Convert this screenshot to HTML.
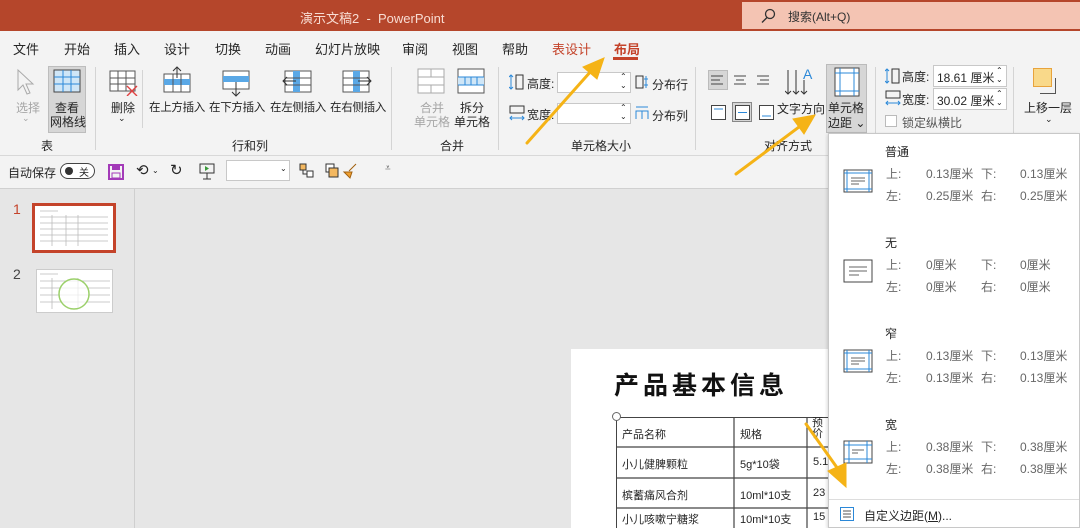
<!DOCTYPE html>
<html><head><meta charset="utf-8"><style>
*{margin:0;padding:0;box-sizing:border-box}
body{width:1080px;height:528px;overflow:hidden;position:relative;background:#e6e6e6;font-family:"Liberation Sans","Noto Sans CJK SC",sans-serif;color:#262626;font-size:12px}
.a{position:absolute;white-space:nowrap}
.g{color:#a6a6a6}
.sep{position:absolute;width:1px;background:#d4d4d4}
.ic{position:absolute}
.m{color:#666;font-size:12px}
.s{font-size:11.5px;letter-spacing:-0.3px}
</style></head><body>
<div class="a" style="left:0;top:0;width:1080px;height:31px;background:#b5462b"></div>
<div class="a" style="left:300px;top:8px;color:#f8dcd2;font-size:13px">演示文稿2 &nbsp;- &nbsp;PowerPoint</div>
<div class="a" style="left:742px;top:2px;width:338px;height:27px;background:#f4c4b3"></div>
<svg class="ic" style="left:760px;top:8px" width="16" height="16"><circle cx="10" cy="6" r="4.5" fill="none" stroke="#333" stroke-width="1.3"/><line x1="7" y1="9.5" x2="2" y2="14.5" stroke="#333" stroke-width="1.4"/></svg>
<div class="a" style="left:788px;top:8px;font-size:12px;color:#333">搜索(Alt+Q)</div>
<div class="a" style="left:0;top:31px;width:1080px;height:126px;background:#f3f3f3"></div>
<div class="a" style="left:13px;top:39px;font-size:13px">文件</div>
<div class="a" style="left:64px;top:39px;font-size:13px">开始</div>
<div class="a" style="left:114px;top:39px;font-size:13px">插入</div>
<div class="a" style="left:164px;top:39px;font-size:13px">设计</div>
<div class="a" style="left:215px;top:39px;font-size:13px">切换</div>
<div class="a" style="left:265px;top:39px;font-size:13px">动画</div>
<div class="a" style="left:315px;top:39px;font-size:13px">幻灯片放映</div>
<div class="a" style="left:402px;top:39px;font-size:13px">审阅</div>
<div class="a" style="left:452px;top:39px;font-size:13px">视图</div>
<div class="a" style="left:502px;top:39px;font-size:13px">帮助</div>
<div class="a" style="left:552px;top:39px;font-size:13px;color:#c4432a">表设计</div>
<div class="a" style="left:614px;top:39px;font-size:13px;color:#c4432a;font-weight:bold">布局</div>
<div class="a" style="left:613px;top:57px;width:25px;height:3px;background:#c4432a"></div>
<svg class="ic" style="left:16px;top:68px" width="22" height="28"><path d="M2 2 L2 22 L7 17 L11 26 L14 25 L10 16 L17 16 Z" fill="none" stroke="#aaa"/></svg>
<div class="a g" style="left:16px;top:99px">选择</div>
<div class="a g" style="left:22px;top:113px;font-size:9px">⌄</div>
<div class="a" style="left:48px;top:66px;width:38px;height:67px;background:#d6d6d6;border:1px solid #bdbdbd"></div>
<svg class="ic" style="left:53px;top:69px" width="28" height="24"><rect x="1" y="1" width="26" height="22" fill="#cfe6f7" stroke="#444"/><path d="M1 8H27M1 15H27M10 1V23M18 1V23" stroke="#2b88d8"/></svg>
<div class="a" style="left:55px;top:99px">查看</div>
<div class="a" style="left:50px;top:113px">网格线</div>
<div class="a" style="left:41px;top:137px">表</div>
<div class="sep" style="left:95px;top:67px;height:83px"></div>
<svg class="ic" style="left:109px;top:70px" width="30" height="26"><rect x="1" y="1" width="25" height="20" fill="#fff" stroke="#555"/><path d="M1 8H26M1 14H26M9 1V21M17 1V21" stroke="#555"/><path d="M18 16L28 26M28 16L18 26" stroke="#e04040" stroke-width="1.4"/></svg>
<div class="a" style="left:111px;top:99px">删除</div>
<div class="a" style="left:118px;top:113px;font-size:9px">⌄</div>
<div class="sep" style="left:142px;top:70px;height:58px"></div>
<svg class="ic" style="left:163px;top:66px" width="28" height="28"><rect x="1" y="8" width="26" height="18" fill="#fff" stroke="#555"/><rect x="1" y="13" width="26" height="6" fill="#5aa8e6"/><path d="M10 8V26M18 8V26" stroke="#555"/><path d="M14 12V1M10 5L14 1L18 5" fill="none" stroke="#333"/></svg>
<div class="a s" style="left:149px;top:99px">在上方插入</div>
<svg class="ic" style="left:222px;top:70px" width="28" height="28"><rect x="1" y="1" width="26" height="18" fill="#fff" stroke="#555"/><rect x="1" y="6" width="26" height="6" fill="#5aa8e6"/><path d="M14 12V26M10 22L14 26L18 22" fill="none" stroke="#333"/></svg>
<div class="a s" style="left:209px;top:99px">在下方插入</div>
<svg class="ic" style="left:282px;top:70px" width="30" height="24"><rect x="3" y="1" width="26" height="21" fill="#fff" stroke="#555"/><rect x="11" y="1" width="7" height="21" fill="#5aa8e6"/><path d="M3 8H29M3 15H29" stroke="#555"/><path d="M14 11H1M5 7L1 11L5 15" fill="none" stroke="#333"/></svg>
<div class="a s" style="left:270px;top:99px">在左侧插入</div>
<svg class="ic" style="left:342px;top:70px" width="30" height="24"><rect x="1" y="1" width="26" height="21" fill="#fff" stroke="#555"/><rect x="11" y="1" width="7" height="21" fill="#5aa8e6"/><path d="M1 8H27M1 15H27" stroke="#555"/><path d="M16 11H29M25 7L29 11L25 15" fill="none" stroke="#333"/></svg>
<div class="a s" style="left:330px;top:99px">在右侧插入</div>
<div class="a" style="left:232px;top:137px">行和列</div>
<div class="sep" style="left:391px;top:67px;height:83px"></div>
<svg class="ic" style="left:417px;top:68px" width="28" height="26"><rect x="1" y="1" width="26" height="24" fill="#fff" stroke="#aaa"/><path d="M1 9H27M1 17H27M14 1V9M14 17V25" stroke="#aaa"/></svg>
<div class="a g" style="left:420px;top:99px">合并</div>
<div class="a g" style="left:414px;top:113px">单元格</div>
<svg class="ic" style="left:457px;top:68px" width="28" height="26"><rect x="1" y="1" width="26" height="24" fill="#fff" stroke="#555"/><rect x="1" y="9" width="26" height="8" fill="#cfe6f7"/><path d="M1 9H27M1 17H27M8 9V17M14 9V17M20 9V17" stroke="#2b88d8"/></svg>
<div class="a" style="left:460px;top:99px">拆分</div>
<div class="a" style="left:454px;top:113px">单元格</div>
<div class="a" style="left:440px;top:137px">合并</div>
<div class="sep" style="left:498px;top:67px;height:83px"></div>
<svg class="ic" style="left:509px;top:74px" width="16" height="16"><path d="M2 1V15M0 3L2 1L4 3M0 13L2 15L4 13" fill="none" stroke="#2b88d8"/><rect x="7" y="1" width="7" height="14" fill="none" stroke="#333"/></svg>
<div class="a" style="left:527px;top:75px">高度:</div>
<div class="a" style="left:557px;top:72px;width:74px;height:21px;background:#fff;border:1px solid #c8c8c8"></div>
<div class="a" style="left:620px;top:72px;font-size:8px;line-height:9px">⌃<br>⌄</div>
<svg class="ic" style="left:509px;top:105px" width="16" height="16"><rect x="1" y="1" width="14" height="7" fill="none" stroke="#333"/><path d="M1 13H15M3 11L1 13L3 15M13 11L15 13L13 15" fill="none" stroke="#2b88d8"/></svg>
<div class="a" style="left:527px;top:106px">宽度:</div>
<div class="a" style="left:557px;top:103px;width:74px;height:21px;background:#fff;border:1px solid #c8c8c8"></div>
<div class="a" style="left:620px;top:103px;font-size:8px;line-height:9px">⌃<br>⌄</div>
<svg class="ic" style="left:635px;top:75px" width="14" height="14"><rect x="1" y="1" width="7" height="12" fill="none" stroke="#333"/><path d="M11 1V13M9 4H13M9 10H13" stroke="#2b88d8"/></svg>
<div class="a" style="left:652px;top:76px">分布行</div>
<svg class="ic" style="left:635px;top:106px" width="14" height="14"><path d="M1 13V5H13V13M7 5V13M1 1H13" fill="none" stroke="#2b88d8"/></svg>
<div class="a" style="left:652px;top:107px">分布列</div>
<div class="a" style="left:571px;top:137px">单元格大小</div>
<div class="sep" style="left:695px;top:67px;height:83px"></div>
<div class="a" style="left:708px;top:70px;width:20px;height:20px;background:#d6d6d6;border:1px solid #bbb"></div>
<svg class="ic" style="left:711px;top:74px" width="70" height="14"><path d="M0 2H12M0 6H9M0 10H12M23 2H35M25 6H33M23 10H35M46 2H58M49 6H58M46 10H58" stroke="#444"/></svg>
<div class="a" style="left:732px;top:102px;width:20px;height:20px;background:#d6d6d6;border:1px solid #888"></div>
<svg class="ic" style="left:711px;top:105px" width="66" height="16"><rect x="0.5" y="0.5" width="14" height="14" fill="#fff" stroke="#444"/><path d="M3 4H12" stroke="#2b88d8"/><rect x="24.5" y="0.5" width="14" height="14" fill="#fff" stroke="#444"/><path d="M27 7.5H36" stroke="#2b88d8"/><rect x="48.5" y="0.5" width="14" height="14" fill="#fff" stroke="#444"/><path d="M51 11H60" stroke="#2b88d8"/></svg>
<svg class="ic" style="left:785px;top:66px" width="30" height="30"><path d="M3 4V28M0 25L3 28L6 25M11 4V28M8 25L11 28L14 25M19 14V28M16 25L19 28L22 25" fill="none" stroke="#333"/><text x="18" y="13" font-size="14" fill="#2b88d8" font-family="Liberation Sans">A</text></svg>
<div class="a" style="left:777px;top:100px">文字方向</div>
<div class="a" style="left:798px;top:114px;font-size:9px">⌄</div>
<div class="a" style="left:764px;top:137px">对齐方式</div>
<div class="a" style="left:826px;top:64px;width:41px;height:69px;background:#d6d6d6;border:1px solid #bbb"></div>
<svg class="ic" style="left:834px;top:67px" width="26" height="30"><rect x="1" y="1" width="24" height="28" fill="#fff" stroke="#444"/><path d="M1 6H25M1 24H25M6 1V29M20 1V29" stroke="#2b88d8"/></svg>
<div class="a" style="left:828px;top:99px">单元格</div>
<div class="a" style="left:828px;top:114px">边距 ⌄</div>
<div class="sep" style="left:875px;top:67px;height:70px"></div>
<svg class="ic" style="left:885px;top:68px" width="16" height="16"><path d="M2 1V15M0 3L2 1L4 3M0 13L2 15L4 13" fill="none" stroke="#2b88d8"/><rect x="7" y="1" width="7" height="14" fill="none" stroke="#333"/></svg>
<div class="a" style="left:902px;top:68px">高度:</div>
<div class="a" style="left:933px;top:65px;width:74px;height:22px;background:#fff;border:1px solid #c8c8c8;padding:3px 3px;font-size:12px">18.61 厘米</div>
<div class="a" style="left:996px;top:66px;font-size:8px;line-height:9px">⌃<br>⌄</div>
<svg class="ic" style="left:885px;top:90px" width="16" height="16"><rect x="1" y="1" width="14" height="7" fill="none" stroke="#333"/><path d="M1 13H15M3 11L1 13L3 15M13 11L15 13L13 15" fill="none" stroke="#2b88d8"/></svg>
<div class="a" style="left:902px;top:91px">宽度:</div>
<div class="a" style="left:933px;top:88px;width:74px;height:22px;background:#fff;border:1px solid #c8c8c8;padding:3px 3px;font-size:12px">30.02 厘米</div>
<div class="a" style="left:996px;top:89px;font-size:8px;line-height:9px">⌃<br>⌄</div>
<div class="a" style="left:885px;top:115px;width:12px;height:12px;background:#fff;border:1px solid #bbb"></div>
<div class="a" style="left:902px;top:114px;color:#555">锁定纵横比</div>
<div class="sep" style="left:1013px;top:67px;height:70px"></div>
<div class="a" style="left:1040px;top:78px;width:16px;height:16px;border:1px solid #555;border-top:none;border-left:none"></div>
<div class="a" style="left:1033px;top:68px;width:19px;height:19px;background:#f9d98a;border:1px solid #e8a33c"></div>
<div class="a" style="left:1024px;top:99px">上移一层</div>
<div class="a" style="left:1045px;top:114px;font-size:9px">⌄</div>
<div class="a" style="left:0;top:155px;width:1080px;height:1px;background:#d8d8d8"></div>
<div class="a" style="left:0;top:156px;width:1080px;height:32px;background:#f3f3f3"></div>
<div class="a" style="left:0;top:188px;width:1080px;height:1px;background:#d0d0d0"></div>
<div class="a" style="left:8px;top:164px;font-size:12px">自动保存</div>
<div class="a" style="left:60px;top:163px;width:35px;height:16px;border:1px solid #444;border-radius:8px;background:#fff"></div>
<div class="a" style="left:65px;top:167px;width:8px;height:8px;border-radius:4px;background:#333"></div>
<div class="a" style="left:79px;top:164px;font-size:10px">关</div>
<svg class="ic" style="left:108px;top:164px" width="16" height="16"><rect x="1" y="1" width="14" height="14" fill="none" stroke="#a33ab8" stroke-width="2"/><rect x="4" y="2" width="8" height="4" fill="#a33ab8"/><rect x="4" y="9" width="8" height="5" fill="none" stroke="#a33ab8"/></svg>
<div class="a" style="left:136px;top:161px;font-size:15px">⟲</div><div class="a" style="left:152px;top:166px;font-size:8px">⌄</div>
<div class="a" style="left:170px;top:161px;font-size:15px">↻</div>
<svg class="ic" style="left:199px;top:163px" width="16" height="18"><rect x="1" y="1" width="14" height="9" fill="none" stroke="#333"/><path d="M6 3L10 5.5L6 8Z" fill="#3a9a3a"/><path d="M8 10V16M4 16H12" stroke="#333"/></svg>
<div class="a" style="left:226px;top:160px;width:64px;height:21px;background:#fff;border:1px solid #c8c8c8"></div>
<div class="a" style="left:280px;top:164px;font-size:8px">⌄</div>
<svg class="ic" style="left:298px;top:162px" width="60" height="18"><rect x="2" y="2" width="6" height="6" fill="#f4b860" stroke="#333"/><rect x="9" y="9" width="6" height="6" fill="#fff" stroke="#333"/><path d="M5 8V12H9" fill="none" stroke="#333"/><rect x="28" y="2" width="8" height="8" fill="#fff" stroke="#333"/><rect x="31" y="6" width="9" height="9" fill="#f4b860" stroke="#333"/><path d="M58 2L51 9M46 10L52 16L54 10Z" fill="#f0a030" stroke="#a06010"/></svg>
<div class="a" style="left:385px;top:163px;font-size:10px;color:#555">⩡</div>
<div class="a" style="left:134px;top:189px;width:1px;height:339px;background:#cfcfcf"></div>
<div class="a" style="left:13px;top:201px;font-size:14px;color:#c4432a">1</div>
<div class="a" style="left:32px;top:203px;width:84px;height:50px;border:3px solid #c4432a;background:#fff"></div>
<svg class="ic" style="left:38px;top:208px" width="72" height="40"><path d="M2 3H20M2 9H70M2 15H70M2 21H70M2 27H70M2 33H70M14 7V38M28 7V38M40 7V38" stroke="#bbb" stroke-width="0.8"/></svg>
<div class="a" style="left:13px;top:266px;font-size:14px;color:#444">2</div>
<div class="a" style="left:36px;top:269px;width:77px;height:44px;border:1px solid #ccc;background:#fff"></div>
<svg class="ic" style="left:38px;top:271px" width="74" height="40"><path d="M2 3H20M2 10H72M2 17H72M2 24H72M2 31H72M14 7V38M40 7V38" stroke="#bbb" stroke-width="0.8"/><circle cx="36" cy="23" r="15" fill="#fff" fill-opacity="0.7" stroke="#9bd06a" stroke-width="1.5"/></svg>
<div class="a" style="left:571px;top:349px;width:260px;height:179px;background:#fff"></div>
<div class="a" style="left:614px;top:366px;font-size:25px;font-weight:bold;letter-spacing:4px;color:#111">产品基本信息</div>
<div class="a" style="left:616px;top:417px;width:215px;height:111px;border-top:1px solid #444;border-left:1px solid #444"></div>
<div class="a" style="left:612px;top:412px;width:9px;height:9px;border-radius:5px;border:1px solid #666;background:#fff"></div>
<svg class="ic" style="left:616px;top:417px" width="215" height="111"><path d="M0 30H215M0 61H215M0 91H215M118 0V111M191 0V111" stroke="#444" stroke-width="1.2"/></svg>
<div class="a" style="left:622px;top:426px;font-size:11px">产品名称</div>
<div class="a" style="left:740px;top:426px;font-size:11px">规格</div>
<div class="a" style="left:812px;top:418px;font-size:11px;line-height:11px">预<br>价</div>
<div class="a" style="left:622px;top:456px;font-size:11px">小儿健脾颗粒</div>
<div class="a" style="left:740px;top:456px;font-size:11px">5g*10袋</div>
<div class="a" style="left:813px;top:456px;font-size:11px">5.1</div>
<div class="a" style="left:622px;top:487px;font-size:11px">槟蓄痛风合剂</div>
<div class="a" style="left:740px;top:487px;font-size:11px">10ml*10支</div>
<div class="a" style="left:813px;top:487px;font-size:11px">23</div>
<div class="a" style="left:622px;top:511px;font-size:11px">小儿咳嗽宁糖浆</div>
<div class="a" style="left:740px;top:511px;font-size:11px">10ml*10支</div>
<div class="a" style="left:813px;top:511px;font-size:11px">15</div>
<div class="a" style="left:828px;top:133px;width:252px;height:395px;background:#fff;border:1px solid #c8c8c8;box-shadow:-1px 1px 3px rgba(0,0,0,.15)"></div>
<svg class="ic" style="left:843px;top:169px" width="30" height="24"><rect x="1" y="1" width="28" height="22" fill="#fff" stroke="#444"/><path d="M1 4H29M1 20H29M4 1V23M26 1V23" stroke="#2b88d8"/><path d="M8 9H22M8 12H22M8 15H16" stroke="#666"/></svg>
<svg class="ic" style="left:843px;top:259px" width="30" height="24"><rect x="1" y="1" width="28" height="22" fill="#fff" stroke="#444"/><path d="M6 8H24M6 12H24M6 16H16" stroke="#666"/></svg>
<svg class="ic" style="left:843px;top:349px" width="30" height="24"><rect x="1" y="1" width="28" height="22" fill="#fff" stroke="#444"/><path d="M1 4H29M1 20H29M4 1V23M26 1V23" stroke="#2b88d8"/><path d="M8 9H22M8 12H22M8 15H16" stroke="#666"/></svg>
<svg class="ic" style="left:843px;top:440px" width="30" height="24"><rect x="1" y="1" width="28" height="22" fill="#fff" stroke="#444"/><path d="M1 5H29M1 19H29M6 1V23M24 1V23" stroke="#2b88d8"/><path d="M9 10H21M9 13H15" stroke="#666"/></svg>
<div class="a" style="left:885px;top:143px;font-size:12px">普通</div>
<div class="a m" style="left:886px;top:165px">上:</div><div class="a m" style="left:926px;top:165px">0.13厘米</div><div class="a m" style="left:981px;top:165px">下:</div><div class="a m" style="left:1020px;top:165px">0.13厘米</div>
<div class="a m" style="left:886px;top:187px">左:</div><div class="a m" style="left:926px;top:187px">0.25厘米</div><div class="a m" style="left:981px;top:187px">右:</div><div class="a m" style="left:1020px;top:187px">0.25厘米</div>
<div class="a" style="left:885px;top:234px;font-size:12px">无</div>
<div class="a m" style="left:886px;top:256px">上:</div><div class="a m" style="left:926px;top:256px">0厘米</div><div class="a m" style="left:981px;top:256px">下:</div><div class="a m" style="left:1020px;top:256px">0厘米</div>
<div class="a m" style="left:886px;top:278px">左:</div><div class="a m" style="left:926px;top:278px">0厘米</div><div class="a m" style="left:981px;top:278px">右:</div><div class="a m" style="left:1020px;top:278px">0厘米</div>
<div class="a" style="left:885px;top:325px;font-size:12px">窄</div>
<div class="a m" style="left:886px;top:347px">上:</div><div class="a m" style="left:926px;top:347px">0.13厘米</div><div class="a m" style="left:981px;top:347px">下:</div><div class="a m" style="left:1020px;top:347px">0.13厘米</div>
<div class="a m" style="left:886px;top:369px">左:</div><div class="a m" style="left:926px;top:369px">0.13厘米</div><div class="a m" style="left:981px;top:369px">右:</div><div class="a m" style="left:1020px;top:369px">0.13厘米</div>
<div class="a" style="left:885px;top:416px;font-size:12px">宽</div>
<div class="a m" style="left:886px;top:438px">上:</div><div class="a m" style="left:926px;top:438px">0.38厘米</div><div class="a m" style="left:981px;top:438px">下:</div><div class="a m" style="left:1020px;top:438px">0.38厘米</div>
<div class="a m" style="left:886px;top:460px">左:</div><div class="a m" style="left:926px;top:460px">0.38厘米</div><div class="a m" style="left:981px;top:460px">右:</div><div class="a m" style="left:1020px;top:460px">0.38厘米</div>
<div class="a" style="left:829px;top:499px;width:250px;height:1px;background:#ddd"></div>
<svg class="ic" style="left:840px;top:507px" width="14" height="14"><rect x="0.5" y="0.5" width="13" height="13" fill="#fff" stroke="#2b88d8"/><path d="M3 4H11M3 7H11M3 10H11" stroke="#555"/></svg>
<div class="a" style="left:864px;top:507px;font-size:12px">自定义边距(<u>M</u>)...</div>
<svg class="ic" style="left:0;top:0" width="1080" height="528">
<g fill="#f5b316" stroke="#f5b316" stroke-linecap="round">
<line x1="527" y1="143" x2="592" y2="70" stroke-width="3"/><path d="M604 58L583 67L597 79Z" stroke-width="1"/>
<line x1="736" y1="174" x2="803" y2="124" stroke-width="3"/><path d="M815 115L793 119L804 134Z" stroke-width="1"/>
<line x1="806" y1="424" x2="838" y2="469" stroke-width="3"/><path d="M846 487L828 471L846 463Z" stroke-width="1"/>
</g></svg>
</body></html>
